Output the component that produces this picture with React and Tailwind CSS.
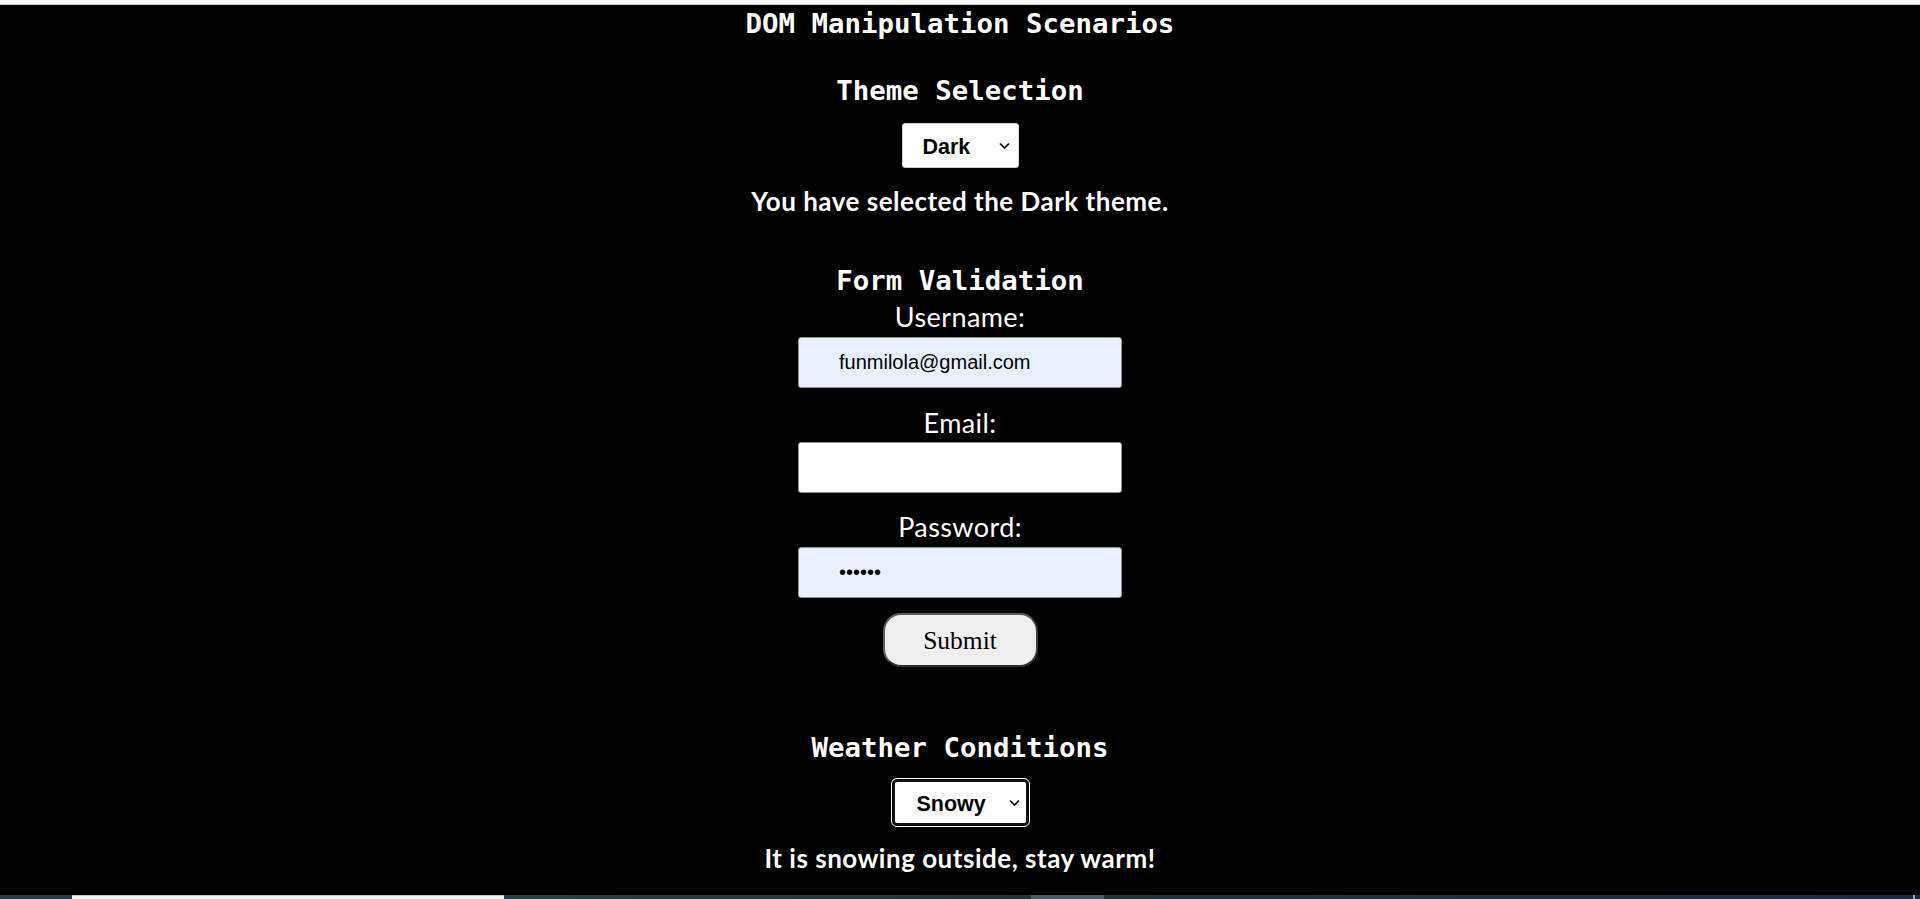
import React from "react";

function Chevron() {
  return (
    <svg width="11" height="7" viewBox="0 0 11 7" className="pointer-events-none absolute right-[9px] top-1/2 -translate-y-1/2">
      <path d="M1 1 L5.5 5.5 L10 1" fill="none" stroke="#111" strokeWidth="1.7" />
    </svg>
  );
}

export default function App() {
  const mono = "font-['DejaVu_Sans_Mono',monospace] font-bold text-[27.4px] leading-[36px]";
  const comic = "font-['Lato',sans-serif]";
  return (
    <div className="flex h-[899px] w-full flex-col overflow-hidden bg-black">
      <div className="h-[4px] w-full bg-[#f7f7f7]" />
      <div className="h-[1px] w-full bg-[#d4d4d4]" />
      <main className="flex flex-1 flex-col items-center text-white">
        <h1 className={`${mono} pt-[1px]`}>DOM Manipulation Scenarios</h1>

        <h2 className={`${mono} mt-[31px]`}>Theme Selection</h2>
        <div className="relative mt-[14px]">
          <select
            defaultValue="dark"
            className="h-[45px] w-[117px] appearance-none rounded-[3px] border border-[#cfcfcf] bg-white pl-[20px] pt-[3px] font-['Liberation_Sans',Arial,sans-serif] text-[21.5px] font-bold text-black outline-none"
          >
            <option value="light">Light</option>
            <option value="dark">Dark</option>
          </select>
          <Chevron />
        </div>
        <p className={`${comic} mt-[18px] text-[26px] font-bold leading-[30px] tracking-[0.5px]`}>You have selected the Dark theme.</p>

        <h2 className={`${mono} mt-[47px]`}>Form Validation</h2>
        <label className={`${comic} mt-[3px] text-[27px] leading-[30px] tracking-[0.4px]`}>Username:</label>
        <input
          type="text"
          readOnly
          value="funmilola@gmail.com"
          className="mt-[5px] h-[51px] w-[324px] rounded-[3px] border border-[#8f8f8f] bg-[#e8f0fe] pl-[40px] font-['Liberation_Sans',Arial,sans-serif] text-[20px] text-black outline-none"
        />
        <label className={`${comic} mt-[20px] text-[27px] leading-[30px] tracking-[0.4px]`}>Email:</label>
        <input
          type="email"
          readOnly
          value=""
          className="mt-[4px] h-[51px] w-[324px] rounded-[3px] border border-[#8f8f8f] bg-white pl-[40px] font-['Liberation_Sans',Arial,sans-serif] text-[20px] text-black outline-none"
        />
        <label className={`${comic} mt-[19px] text-[27px] leading-[30px] tracking-[0.4px]`}>Password:</label>
        <input
          type="password"
          readOnly
          value="abcdef"
          className="mt-[5px] h-[51px] w-[324px] rounded-[3px] border border-[#8f8f8f] bg-[#e8f0fe] pl-[40px] font-['Liberation_Sans',Arial,sans-serif] text-[20px] text-black outline-none"
        />
        <button className="mt-[15px] h-[54px] w-[155px] rounded-[18px] border-2 border-[#5c5c5c] border-b-[#2e2e2e] border-r-[#3a3a3a] bg-[#efefef] pt-[2px] font-['Liberation_Serif',Georgia,serif] text-[25.5px] text-black">
          Submit
        </button>

        <h2 className={`${mono} mt-[63px]`}>Weather Conditions</h2>
        <div className="relative mt-[12px] rounded-[6px] border border-white bg-black p-[1px]">
          <select
            defaultValue="snowy"
            className="h-[45px] w-[135px] appearance-none rounded-[4px] border-2 border-[#111] bg-white pl-[22px] pt-[3px] font-['Liberation_Sans',Arial,sans-serif] text-[21.5px] font-bold text-black outline-none"
          >
            <option value="sunny">Sunny</option>
            <option value="rainy">Rainy</option>
            <option value="snowy">Snowy</option>
          </select>
          <Chevron />
        </div>
        <p className={`${comic} mt-[16px] text-[26px] font-bold leading-[30px] tracking-[0.5px]`}>It is snowing outside, stay warm!</p>
      </main>
      <div className="flex h-[4px] w-full">
        <div className="w-[72px] bg-[#263c42]" />
        <div className="w-[432px] border-t border-[#c8c8c8] bg-[#f0f0f0]" />
        <div className="w-[527px] bg-gradient-to-r from-[#273f44] to-[#233238]" />
        <div className="w-[73px] bg-[#4b5b63]" />
        <div className="flex-1 bg-gradient-to-r from-[#22343a] to-[#1f2a42]" />
        <div className="w-[2px] bg-[#9aa4b0]" />
        <div className="w-[5px] bg-[#1f2a42]" />
      </div>
    </div>
  );
}
